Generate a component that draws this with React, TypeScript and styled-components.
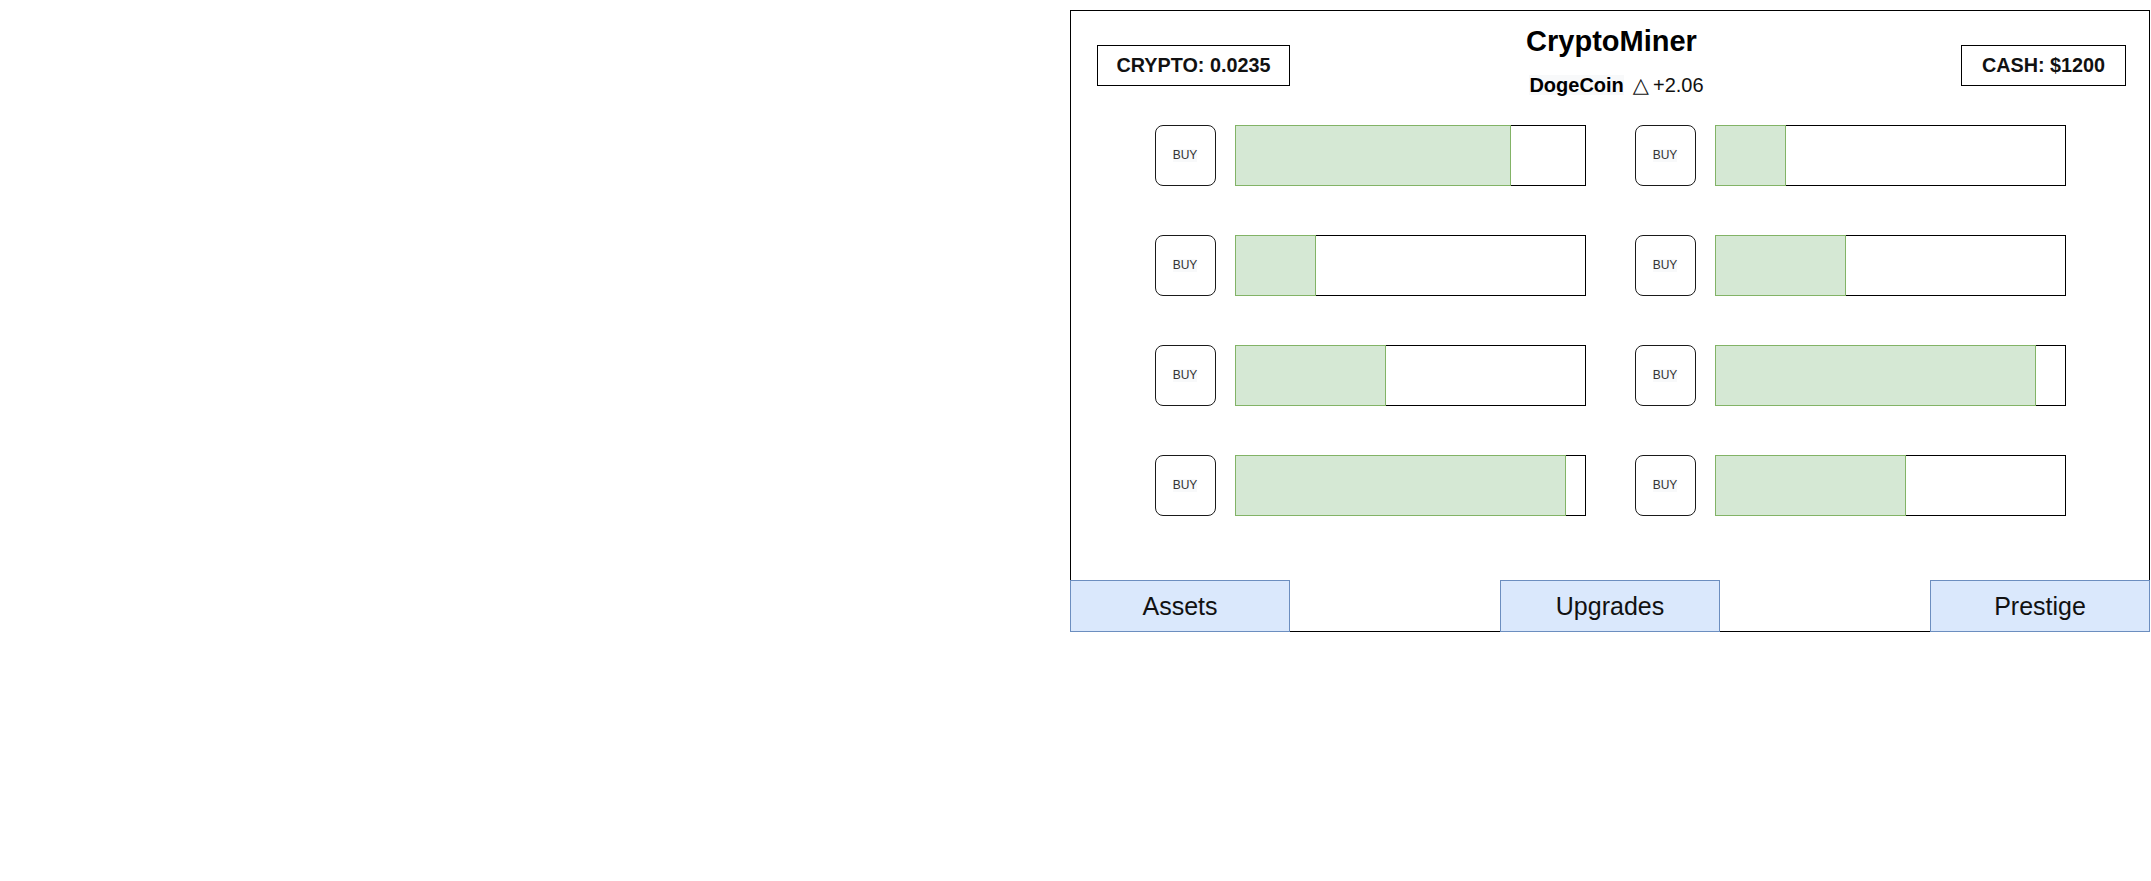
import React from "react";
import styled, { createGlobalStyle } from "styled-components";

const GlobalStyle = createGlobalStyle`
  html, body {
    margin: 0;
    padding: 0;
    background: #ffffff;
  }
  body {
    font-family: "Liberation Sans", Arial, Helvetica, sans-serif;
    color: #000;
  }
`;

const Page = styled.div`
  display: flex;
  padding: 10px 0 0 1070px;
`;

const Panel = styled.section`
  box-sizing: border-box;
  width: 1080px;
  height: 622px;
  border: 1px solid #000;
  display: flex;
  flex-direction: column;
  background: #fff;
`;

const Header = styled.header`
  display: grid;
  grid-template-columns: 1fr auto 1fr;
  align-items: start;
  padding: 0 23px 0 26px;
`;

const StatBox = styled.div<{ $align: "start" | "end"; $width: number }>`
  box-sizing: border-box;
  justify-self: ${(p) => p.$align};
  width: ${(p) => p.$width}px;
  height: 41px;
  margin-top: 34px;
  border: 1px solid #000;
  display: flex;
  align-items: center;
  justify-content: center;
  font-size: 19.8px;
  font-weight: 700;
  color: #111;
`;

const TitleBlock = styled.div`
  display: flex;
  flex-direction: column;
  align-items: center;
  margin-top: 14px;
`;

const Title = styled.h1`
  margin: 0;
  font-size: 29px;
  line-height: 32px;
  font-weight: 700;
  color: #000;
`;

const CoinLine = styled.div`
  display: flex;
  align-items: center;
  margin-top: 18px;
  height: 20px;
  font-size: 20px;
  line-height: 20px;
  margin-left: 10px;
`;

const CoinName = styled.span`
  font-weight: 700;
  background: #f8f9fa;
  color: #000;
`;

const Delta = styled.span`
  margin-left: 9px;
  font-family: "DejaVu Sans", "Liberation Sans", sans-serif;
  font-size: 21px;
  line-height: 20px;
  color: #111;
`;

const Change = styled.span`
  margin-left: 4px;
  color: #111;
`;

const Miners = styled.div`
  display: grid;
  grid-template-columns: repeat(2, auto);
  justify-content: center;
  column-gap: 49px;
  row-gap: 49px;
  margin-top: 30px;
`;

const MinerRow = styled.div`
  display: flex;
  align-items: stretch;
  gap: 19px;
  height: 61px;
`;

const BuyButton = styled.button`
  box-sizing: border-box;
  width: 61px;
  height: 61px;
  padding: 0;
  border: 1px solid #1a1a1a;
  border-radius: 8px;
  background: #fff;
  display: flex;
  align-items: center;
  justify-content: center;
  font-family: "Liberation Sans", Arial, sans-serif;
  font-size: 12px;
  color: #333;
  cursor: pointer;
`;

const BuyLabel = styled.span`
  background: #f8f9fa;
  line-height: 13px;
`;

const Bar = styled.div`
  display: flex;
  width: 351px;
  height: 61px;
`;

const Fill = styled.div`
  box-sizing: border-box;
  height: 100%;
  flex: none;
  background: #d5e8d4;
  border: 1px solid #82b366;
`;

const Rest = styled.div`
  box-sizing: border-box;
  flex: 1;
  height: 100%;
  background: #fff;
  border: 1px solid #000;
  border-left: none;
`;

const Tabs = styled.nav`
  display: flex;
  justify-content: space-between;
  margin: auto -1px -1px;
`;

const Tab = styled.button`
  box-sizing: border-box;
  width: 220px;
  height: 52px;
  padding: 0;
  border: 1px solid #6c8ebf;
  background: #dae8fc;
  font-family: "Liberation Sans", Arial, sans-serif;
  font-size: 25px;
  color: #111;
  cursor: pointer;
`;

const fills = [276, 71, 81, 131, 151, 321, 331, 191];

export default function App() {
  return (
    <>
      <GlobalStyle />
      <Page>
        <Panel>
          <Header>
            <StatBox $align="start" $width={193}>CRYPTO: 0.0235</StatBox>
            <TitleBlock>
              <Title>CryptoMiner</Title>
              <CoinLine>
                <CoinName>DogeCoin</CoinName>
                <Delta>△</Delta>
                <Change>+2.06</Change>
              </CoinLine>
            </TitleBlock>
            <StatBox $align="end" $width={165}>CASH: $1200</StatBox>
          </Header>
          <Miners>
            {fills.map((w, i) => (
              <MinerRow key={i}>
                <BuyButton>
                  <BuyLabel>BUY</BuyLabel>
                </BuyButton>
                <Bar>
                  <Fill style={{ width: `${w}px` }} />
                  <Rest />
                </Bar>
              </MinerRow>
            ))}
          </Miners>
          <Tabs>
            <Tab>Assets</Tab>
            <Tab>Upgrades</Tab>
            <Tab>Prestige</Tab>
          </Tabs>
        </Panel>
      </Page>
    </>
  );
}
